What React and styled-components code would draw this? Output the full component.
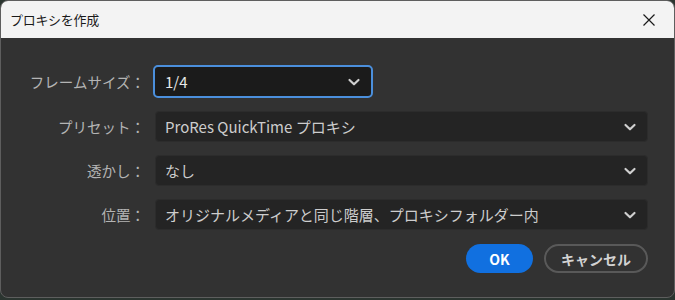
import React from 'react';
import styled, { createGlobalStyle } from 'styled-components';

const Global = createGlobalStyle`
  html, body {
    margin: 0;
    padding: 0;
    background: #2b3530;
    font-family: "Noto Sans CJK JP", "Noto Sans", sans-serif;
  }
`;

const Window = styled.div`
  width: 673px;
  height: 296px;
  border: 1px solid #5e5e5e;
  border-radius: 8px;
  overflow: hidden;
  background: #323232;
  display: flex;
  flex-direction: column;
`;

const TitleBar = styled.div`
  height: 37px;
  background: #f3f3f3;
  display: flex;
  align-items: center;
  justify-content: space-between;
  padding: 0 10px 0 9px;
  flex-shrink: 0;
`;

const Title = styled.span`
  font-size: 13px;
  color: #1a1a1a;
  letter-spacing: -0.3px;
`;

const Close = styled.button`
  width: 24px;
  height: 24px;
  border: 0;
  background: none;
  padding: 0;
  display: flex;
  align-items: center;
  justify-content: center;
  margin-right: 3px;
`;

const Body = styled.div`
  flex: 1;
  padding: 27px 26px 0 0;
  display: flex;
  flex-direction: column;
`;

const Form = styled.div`
  display: grid;
  grid-template-columns: 152px 1fr;
  row-gap: 13px;
  align-items: center;
`;

const Label = styled.span`
  text-align: right;
  padding-right: 8px;
  font-size: 14.5px;
  color: #b4b4b4;
  white-space: nowrap;
`;

const Select = styled.div`
  box-sizing: border-box;
  height: ${p => (p.focused ? '33px' : '31px')};
  width: ${p => (p.focused ? '220px' : '493px')};
  margin-left: ${p => (p.focused ? '0' : '2px')};
  background: ${p => (p.focused ? '#1b1b1b' : '#242424')};
  border: ${p => (p.focused ? '2px solid #4b8fdc' : '1px solid #2c2c2c')};
  border-radius: ${p => (p.focused ? '5px' : '4px')};
  display: flex;
  align-items: center;
  justify-content: space-between;
  padding: ${p => (p.focused ? '0 10px 0 10px' : '0 10px 0 9px')};
  font-size: 15px;
  color: ${p => (p.focused ? '#e8e8e8' : '#cdcdcd')};
  white-space: nowrap;
`;

const Footer = styled.div`
  display: flex;
  justify-content: flex-end;
  gap: 11px;
  margin-top: 14px;
`;

const Button = styled.button`
  box-sizing: border-box;
  height: 29px;
  border-radius: 15px;
  font-family: "Noto Sans CJK JP", "Noto Sans", sans-serif;
  font-size: 14px;
  font-weight: 700;
  display: flex;
  align-items: center;
  justify-content: center;
  padding: 0;
  width: ${p => p.w}px;
  background: ${p => (p.primary ? '#1170e0' : 'transparent')};
  color: ${p => (p.primary ? '#ffffff' : '#d2d2d2')};
  border: ${p => (p.primary ? '0' : '2px solid #595959')};
`;

const Chevron = () => (
  <svg width="14" height="14" viewBox="0 0 14 14">
    <path d="M2.5 5 L7 9.3 L11.5 5" fill="none" stroke="#cfcfcf" strokeWidth="2.2" strokeLinecap="round" strokeLinejoin="round" />
  </svg>
);

const rows = [
  { label: 'フレームサイズ：', value: '1/4', focused: true },
  { label: 'プリセット：', value: 'ProRes QuickTime プロキシ' },
  { label: '透かし：', value: 'なし' },
  { label: '位置：', value: 'オリジナルメディアと同じ階層、プロキシフォルダー内' },
];

export default function App() {
  return (
    <>
      <Global />
      <Window>
        <TitleBar>
          <Title>プロキシを作成</Title>
          <Close>
            <svg width="14" height="14" viewBox="0 0 14 14">
              <path d="M1.5 1.5 L12.5 12.5 M12.5 1.5 L1.5 12.5" stroke="#1a1a1a" strokeWidth="1.2" />
            </svg>
          </Close>
        </TitleBar>
        <Body>
          <Form>
            {rows.map(r => (
              <React.Fragment key={r.label}>
                <Label>{r.label}</Label>
                <Select focused={r.focused}>
                  <span>{r.value}</span>
                  <Chevron />
                </Select>
              </React.Fragment>
            ))}
          </Form>
          <Footer>
            <Button primary w={67}>OK</Button>
            <Button w={104}>キャンセル</Button>
          </Footer>
        </Body>
      </Window>
    </>
  );
}
